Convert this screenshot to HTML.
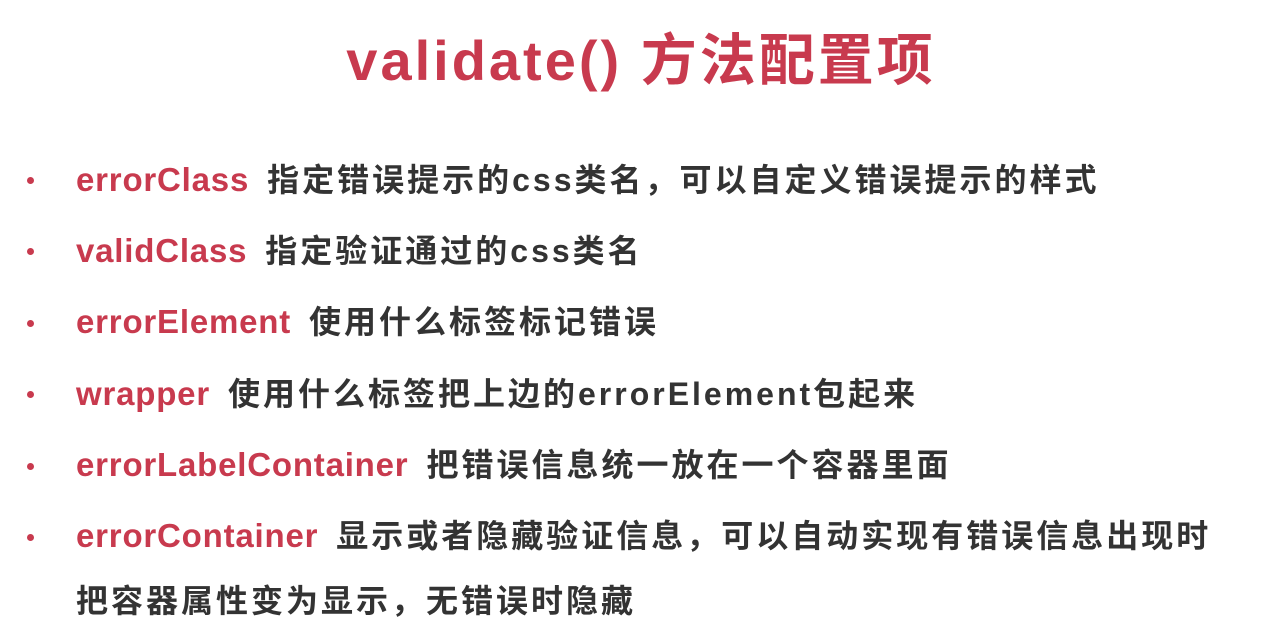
<!DOCTYPE html>
<html><head><meta charset="utf-8"><style>
body{margin:0;width:1282px;height:629px;background:#fff;overflow:hidden;font-family:"Liberation Sans","Noto Sans CJK SC",sans-serif;font-weight:bold;}
h1{position:absolute;top:16px;left:0;width:1282px;text-align:center;margin:0;font-size:56px;letter-spacing:3px;color:#c83a4e;font-family:"Liberation Sans","Noto Sans CJK SC",sans-serif;}
.l{position:absolute;left:76px;font-size:32px;color:#333;white-space:nowrap;line-height:40px;letter-spacing:3px;}
.l b{color:#c83a4e;font-size:33px;margin-right:18px;letter-spacing:0.8px;}
.d{position:absolute;left:27px;width:7px;height:7px;border-radius:50%;background:#c83a4e;}
</style></head><body>
<h1>validate() 方法配置项</h1>
<div class="d" style="top:177px"></div><div class="l" style="top:160px"><b>errorClass</b>指定错误提示的css类名，可以自定义错误提示的样式</div>
<div class="d" style="top:248px"></div><div class="l" style="top:231px"><b>validClass</b>指定验证通过的css类名</div>
<div class="d" style="top:320px"></div><div class="l" style="top:302px"><b>errorElement</b>使用什么标签标记错误</div>
<div class="d" style="top:391px"></div><div class="l" style="top:374px"><b>wrapper</b>使用什么标签把上边的errorElement包起来</div>
<div class="d" style="top:463px"></div><div class="l" style="top:445px"><b>errorLabelContainer</b>把错误信息统一放在一个容器里面</div>
<div class="d" style="top:534px"></div><div class="l" style="top:516px"><b>errorContainer</b>显示或者隐藏验证信息，可以自动实现有错误信息出现时</div>
<div class="l" style="top:581px">把容器属性变为显示，无错误时隐藏</div>
</body></html>
